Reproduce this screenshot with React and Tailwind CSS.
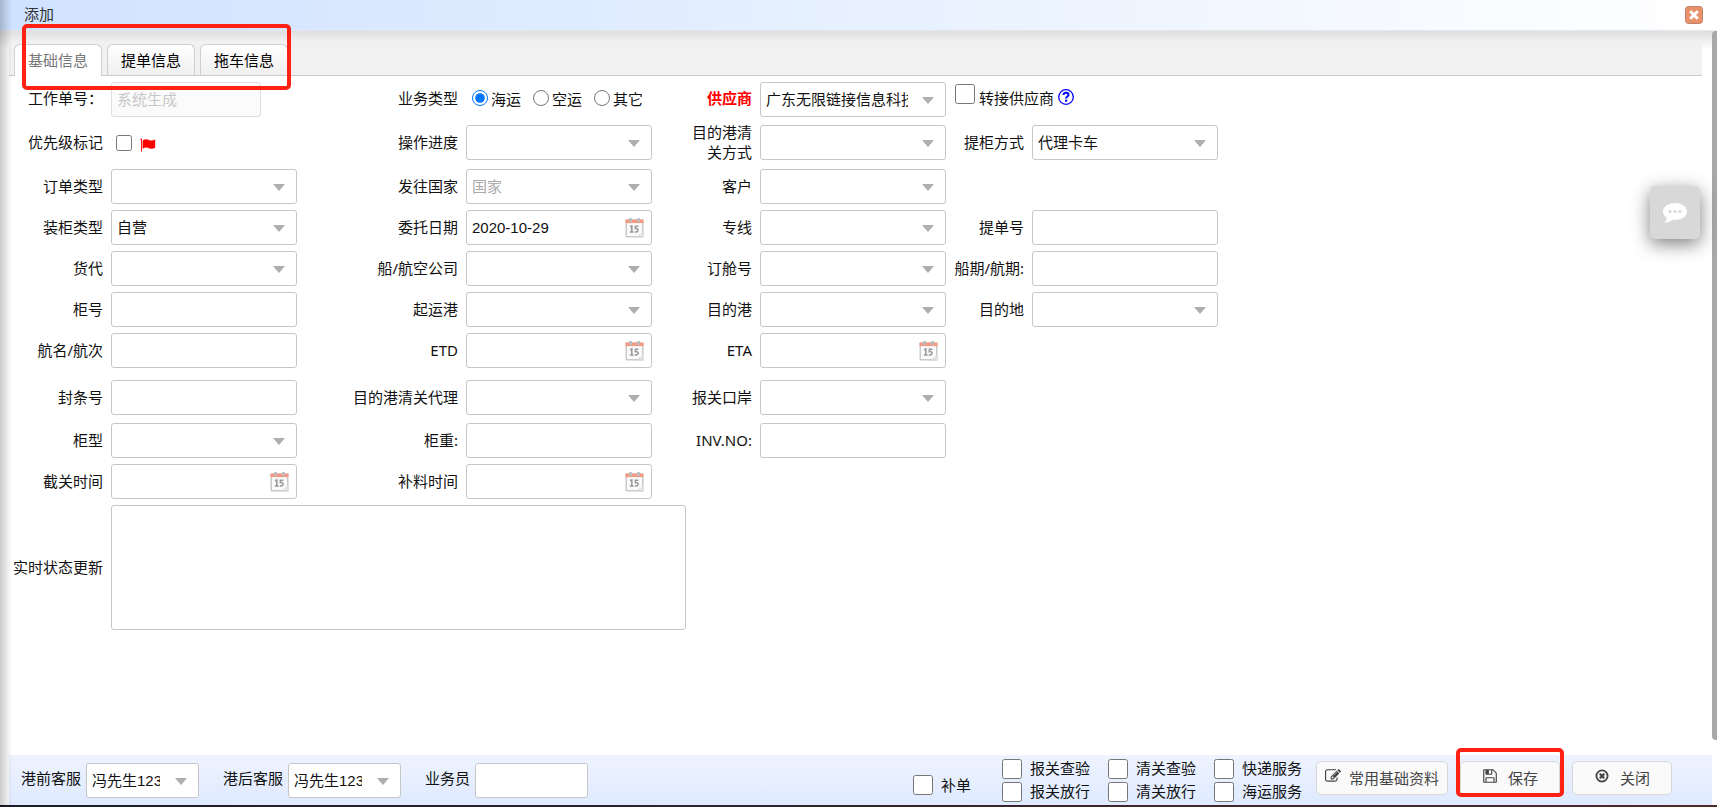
import React, { useState } from "react";

const labelFont = "font-['Noto_Sans','Noto_Sans_CJK_SC',sans-serif]";
const fieldFont = "font-['Liberation_Sans','Noto_Sans_CJK_SC',sans-serif]";
const box =
  "h-[35px] w-full rounded-[3px] border border-[#c6c6c6] bg-white pl-[5px] text-[15px] text-[#111] outline-none placeholder:text-[#a9a9a9] " +
  fieldFont;

function Arrow() {
  return (
    <svg
      className="pointer-events-none absolute top-[15px] right-3 h-[7px] w-[12px]"
      viewBox="0 0 12 7"
      aria-hidden="true"
    >
      <path d="M0 0H12L6 7Z" fill="#aeaeae" />
    </svg>
  );
}

function Calendar() {
  return (
    <svg
      className="pointer-events-none absolute top-2 right-2 h-5 w-[19px]"
      viewBox="0 0 19 20"
      aria-hidden="true"
    >
      <rect x="0.5" y="1.5" width="18" height="18" rx="1" fill="#c9c9c9" />
      <rect x="2" y="4" width="15" height="14" fill="#fbfbfb" />
      <rect x="0.5" y="1.5" width="18" height="3.6" fill="#f59a82" />
      <rect x="4" y="0" width="3" height="4" rx="1" fill="#b9bcc0" />
      <rect x="12" y="0" width="3" height="4" rx="1" fill="#b9bcc0" />
      <path d="M5 8.8L6.8 8V14M4.8 14H8.6" fill="none" stroke="#999" strokeWidth="1.6" />
      <path
        d="M13.4 8.2H10.4V10.6C12 10.2 13.2 11 13.1 12.3C13 13.8 11.2 14.3 9.8 13.7"
        fill="none"
        stroke="#999"
        strokeWidth="1.6"
      />
      <path d="M11 19.5L18.5 13V19.5Z" fill="#d6d6d6" />
      <path d="M12 17.5H14M15.5 15V18M17 14.5V18" stroke="#efefef" strokeWidth="1" />
    </svg>
  );
}

function SelectBox({ id, value = "", placeholder, clip = "pr-[37px]" }) {
  return (
    <div className="relative">
      <select
        id={id}
        defaultValue={value}
        className={`${box} ${clip} appearance-none overflow-hidden pt-[2px] ${placeholder ? "text-[#a9a9a9]" : ""}`}
      >
        <option value={value}>{value || placeholder || ""}</option>
      </select>
      <Arrow />
    </div>
  );
}

function DateBox({ id, value = "" }) {
  return (
    <div className="relative">
      <input id={id} type="text" defaultValue={value} className={`${box} pr-8`} />
      <Calendar />
    </div>
  );
}

function FieldLabel({ htmlFor, children, wrap }) {
  return (
    <label
      htmlFor={htmlFor}
      className={`justify-self-end pr-px pb-[2px] text-right text-[15px] leading-5 ${wrap ? "w-16" : "whitespace-nowrap"}`}
    >
      {children}
    </label>
  );
}

function Cell({ id, label, kind, value, placeholder, wrap }) {
  return (
    <>
      <FieldLabel htmlFor={id} wrap={wrap}>
        {label}
      </FieldLabel>
      {kind === "select" && <SelectBox id={id} value={value} placeholder={placeholder} />}
      {kind === "date" && <DateBox id={id} value={value} />}
      {kind === "text" && <input id={id} type="text" className={box} />}
    </>
  );
}

function Row({ className = "h-[41px]", children }) {
  return (
    <div
      className={`grid grid-cols-[104px_186px_155px_186px_94px_186px_72px_186px] items-center gap-x-[7px] ${className}`}
    >
      {children}
    </div>
  );
}

const rows = [
  [
    { id: "orderType", label: "订单类型", kind: "select" },
    { id: "country", label: "发往国家", kind: "select", placeholder: "国家" },
    { id: "customer", label: "客户", kind: "select" },
  ],
  [
    { id: "loadType", label: "装柜类型", kind: "select", value: "自营" },
    { id: "entrustDate", label: "委托日期", kind: "date", value: "2020-10-29" },
    { id: "line", label: "专线", kind: "select" },
    { id: "blNo", label: "提单号", kind: "text" },
  ],
  [
    { id: "forwarder", label: "货代", kind: "select" },
    { id: "carrier", label: "船/航空公司", kind: "select" },
    { id: "bookingNo", label: "订舱号", kind: "select" },
    { id: "schedule", label: "船期/航期:", kind: "text" },
  ],
  [
    { id: "containerNo", label: "柜号", kind: "text" },
    { id: "pol", label: "起运港", kind: "select" },
    { id: "pod", label: "目的港", kind: "select" },
    { id: "destination", label: "目的地", kind: "select" },
  ],
  [
    { id: "vessel", label: "航名/航次", kind: "text" },
    { id: "etd", label: "ETD", kind: "date" },
    { id: "eta", label: "ETA", kind: "date" },
  ],
  [
    { id: "sealNo", label: "封条号", kind: "text" },
    { id: "podAgent", label: "目的港清关代理", kind: "select" },
    { id: "customsPort", label: "报关口岸", kind: "select" },
  ],
  [
    { id: "containerType", label: "柜型", kind: "select" },
    { id: "containerWeight", label: "柜重:", kind: "text" },
    { id: "invNo", label: "INV.NO:", kind: "text" },
  ],
  [
    { id: "cutoff", label: "截关时间", kind: "date" },
    { id: "supplement", label: "补料时间", kind: "date" },
  ],
];

const services = ["报关查验", "清关查验", "快递服务", "报关放行", "清关放行", "海运服务"];

const tabs = ["基础信息", "提单信息", "拖车信息"];

function EditIcon() {
  return (
    <svg className="h-4 w-4" viewBox="0 0 1792 1792" fill="currentColor" aria-hidden="true">
      <path d="M888 1184l116-116-152-152-116 116v56h96v96h56zm440-720q-16-16-33 1l-350 350q-17 17-1 33t33-1l350-350q17-17 1-33zm80 594v190q0 119-84.5 203.5t-203.5 84.5h-832q-119 0-203.5-84.5t-84.5-203.5v-832q0-119 84.5-203.5t203.5-84.5h832q63 0 117 25 15 7 18 23 3 17-9 29l-49 49q-14 14-32 8-23-6-45-6h-832q-66 0-113 47t-47 113v832q0 66 47 113t113 47h832q66 0 113-47t47-113v-126q0-13 9-22l64-64q15-15 35-7t20 29zm-96-738l288 288-672 672h-288v-288zm444 132l-92 92-288-288 92-92q28-28 68-28t68 28l152 152q28 28 28 68t-28 68z" />
    </svg>
  );
}

function SaveIcon() {
  return (
    <svg className="h-4 w-4" viewBox="0 0 1792 1792" fill="currentColor" aria-hidden="true">
      <path d="M512 1536h768v-384h-768v384zm896 0h128v-896q0-14-10-38.5t-20-34.5l-281-281q-10-10-34-20t-39-10v416q0 40-28 68t-68 28h-576q-40 0-68-28t-28-68v-416h-128v1280h128v-416q0-40 28-68t68-28h832q40 0 68 28t28 68v416zm-384-928v-320q0-13-9.5-22.5t-22.5-9.5h-192q-13 0-22.5 9.5t-9.5 22.5v320q0 13 9.5 22.5t22.5 9.5h192q13 0 22.5-9.5t9.5-22.5zm640 32v928q0 40-28 68t-68 28h-1344q-40 0-68-28t-28-68v-1344q0-40 28-68t68-28h928q40 0 88 20t76 48l280 280q28 28 48 76t20 88z" />
    </svg>
  );
}

function CancelIcon() {
  return (
    <svg className="h-4 w-4" viewBox="0 0 16 16" fill="none" stroke="currentColor" aria-hidden="true">
      <circle cx="8" cy="8" r="5.6" strokeWidth="1.8" />
      <path d="M5.8 5.8L10.2 10.2M10.2 5.8L5.8 10.2" strokeWidth="2.3" />
    </svg>
  );
}

function ToolButton({ className, icon, gap = "gap-[10px]", children }) {
  return (
    <button
      type="button"
      className={`flex h-[34px] items-center justify-center rounded-[5px] border border-[#d8d8d8] bg-[#fafafa] text-[15px] text-[#444] ${gap} ${className}`}
    >
      <span className="pb-1">{icon}</span>
      {children}
    </button>
  );
}

export default function App() {
  const [active, setActive] = useState(0);
  const [type, setType] = useState("海运");

  return (
    <div className={`relative flex min-h-screen flex-col bg-white text-[15px] text-[#111] ${labelFont}`}>
      <header className="flex h-[31px] items-center justify-between border-b border-[#e4e8ee] bg-linear-to-r from-[#cfe2ff] to-white pr-[14px] pl-6">
        <h1 className="pb-[2px] text-[15px] text-[#333]">添加</h1>
        <button type="button" aria-label="关闭窗口">
          <svg className="h-[18px] w-[18px]" viewBox="0 0 18 18">
            <rect x="0.5" y="0.5" width="17" height="17" rx="3" fill="#e8926c" stroke="#c0806c" />
            <path d="M5.2 5.2L12.8 12.8M12.8 5.2L5.2 12.8" stroke="#fff" strokeWidth="3" />
          </svg>
        </button>
      </header>

      <main className="flex-1">
        <div className="bg-linear-to-b from-[#dedede] to-white to-40% pr-[15px] pl-[9px]">
          <div
            role="tablist"
            className="flex h-[45px] items-end gap-[5px] border-b border-[#cbcbcb] bg-linear-to-b from-[#dfdfdf] to-[#f1f1f1] to-25% pl-[5px]"
          >
            {tabs.map((tab, i) => (
              <button
                key={tab}
                type="button"
                role="tab"
                aria-selected={active === i}
                onClick={() => setActive(i)}
                className={`w-[88px] rounded-t-[6px] border border-b-0 border-[#cfcfcf] text-[15px] ${
                  active === i
                    ? "-mb-px h-8 bg-white pb-px text-[#777]"
                    : "h-[31px] bg-linear-to-b from-white to-[#efefef] text-black"
                }`}
              >
                {tab}
              </button>
            ))}
          </div>
        </div>

        <form className="pt-[3px]">
          <Row className="h-10">
            <FieldLabel htmlFor="jobNo">工作单号：</FieldLabel>
            <input
              id="jobNo"
              type="text"
              disabled
              placeholder="系统生成"
              className={`h-[35px] w-[150px] rounded-[3px] border border-[#dedede] bg-[#fbfbfb] pl-[5px] text-[15px] placeholder:text-[#c8c8c8] ${fieldFont}`}
            />
            <span id="bizType" className="justify-self-end pr-px pb-[2px]">
              业务类型
            </span>
            <div role="radiogroup" aria-labelledby="bizType" className="flex items-center gap-3 pl-[6px]">
              {["海运", "空运", "其它"].map((t) => (
                <label key={t} className="flex items-center gap-[3px] whitespace-nowrap">
                  <input
                    type="radio"
                    name="biz"
                    className="mb-[2px] h-4 w-4 accent-[#0075ff]"
                    checked={type === t}
                    onChange={() => setType(t)}
                  />
                  {t}
                </label>
              ))}
            </div>
            <label htmlFor="supplier" className="justify-self-end pr-px pb-[2px] font-bold text-[#f00]">
              供应商
            </label>
            <SelectBox id="supplier" value="广东无限链接信息科技有限公司" />
            <div className="col-span-2 flex items-center gap-1 pb-[2px] pl-[2px]">
              <input id="transfer" type="checkbox" className="mb-2 h-5 w-5" />
              <label htmlFor="transfer">转接供应商</label>
              <svg className="mb-[2px] h-4 w-4" viewBox="0 0 16 16" fill="none" stroke="#00f" aria-hidden="true">
                <circle cx="8" cy="8" r="7.3" strokeWidth="1.3" />
                <path d="M5.5 6.1C5.5 4.5 6.6 3.8 8 3.8S10.5 4.6 10.5 5.9C10.5 7.5 8.1 7.6 8.1 9.5" strokeWidth="2" />
                <path d="M8.1 10.6V12.7" strokeWidth="2.2" />
              </svg>
            </div>
          </Row>

          <Row className="h-[47px]">
            <FieldLabel htmlFor="priority">优先级标记</FieldLabel>
            <div className="flex items-center gap-2 pl-[5px]">
              <input id="priority" type="checkbox" className="h-4 w-4" />
              <svg className="mt-1 h-[14px] w-4" viewBox="0 0 16 14" aria-hidden="true">
                <path d="M0.6 0.5H2V13.5H1.1V2.6L0.6 2Z" fill="#f00" />
                <path
                  d="M2.6 2.4C5 0.9 7 1 9 1.9C11.4 2.9 13 2.2 15.2 1.4V9.8C13 10.8 11.2 11.2 9 10.2C7 9.3 5 9.3 2.6 10.8Z"
                  fill="#f00"
                />
              </svg>
            </div>
            <Cell id="progress" label="操作进度" kind="select" />
            <Cell id="clearance" label="目的港清关方式" kind="select" wrap />
            <Cell id="pickup" label="提柜方式" kind="select" value="代理卡车" />
          </Row>

          {rows.map((cells, i) => (
            <Row key={cells[0].id} className={i === 5 ? "h-[49px] pt-1" : "h-[41px]"}>
              {cells.map((cell) => (
                <Cell key={cell.id} {...cell} />
              ))}
            </Row>
          ))}

          <div className="grid grid-cols-[104px_575px] items-center gap-x-[7px] pt-[3px]">
            <FieldLabel htmlFor="status">实时状态更新</FieldLabel>
            <textarea
              id="status"
              className="block h-[125px] w-full resize-none rounded-[3px] border border-[#c6c6c6] p-[5px] outline-none"
            />
          </div>
        </form>
      </main>

      <footer className="mr-[5px] ml-[9px] flex h-[50px] items-center bg-linear-to-b from-[#eef3ff] to-[#dfeaff] pl-3">
        <div className="flex flex-1 items-center gap-6 whitespace-nowrap">
          <div className="flex items-center gap-[5px]">
            <label htmlFor="preService" className="pb-[3px]">
              港前客服
            </label>
            <div className="w-[113px]">
              <SelectBox id="preService" value="冯先生123" clip="pr-[38px]" />
            </div>
          </div>
          <div className="flex items-center gap-[5px]">
            <label htmlFor="postService" className="pb-[3px]">
              港后客服
            </label>
            <div className="w-[113px]">
              <SelectBox id="postService" value="冯先生123" clip="pr-[38px]" />
            </div>
          </div>
          <div className="flex items-center gap-[5px]">
            <label htmlFor="salesman" className="pb-[3px]">
              业务员
            </label>
            <div className="w-[113px]">
              <input id="salesman" type="text" className={box} />
            </div>
          </div>
        </div>

        <label className="mt-[10px] mr-[31px] flex items-center gap-2">
          <input type="checkbox" className="h-5 w-5" />
          补单
        </label>

        <div className="mr-[14px] grid grid-cols-3 gap-x-[18px] gap-y-[3px]">
          {services.map((name) => (
            <label key={name} className="flex h-5 items-center gap-2 whitespace-nowrap">
              <input type="checkbox" className="h-5 w-5" />
              {name}
            </label>
          ))}
        </div>

        <div className="mr-[40px] mb-1 flex items-center gap-3">
          <ToolButton className="w-[132px]" icon={<EditIcon />} gap="gap-2">
            常用基础资料
          </ToolButton>
          <div className="relative">
            <ToolButton className="w-[100px]" icon={<SaveIcon />}>
              保存
            </ToolButton>
            <span className="pointer-events-none absolute -top-[13px] -right-1 -bottom-[2px] -left-1 rounded-[5px] border-4 border-[#ff2114]" />
          </div>
          <ToolButton className="w-[100px]" icon={<CancelIcon />}>
            关闭
          </ToolButton>
        </div>
      </footer>
      <div className="h-[2px] bg-linear-to-r from-[#1a1b2b] to-[#4d2b29]" />

      <div className="pointer-events-none absolute inset-y-0 left-0 w-3 bg-linear-to-r from-black/20 to-transparent" />
      <div className="pointer-events-none absolute top-6 left-[22px] h-[66px] w-[269px] rounded-[5px] border-4 border-[#ff2114]" />
      <div className="absolute top-[31px] right-0 bottom-[67px] w-[5px] rounded-l-[4px] bg-[#a8a8a8]" />
      <button
        type="button"
        aria-label="在线客服"
        className="absolute top-[186px] right-[17px] flex h-[53px] w-[50px] items-center justify-center rounded-[5px] bg-[#d8d8d8] shadow-[0_5px_18px_rgba(0,0,0,0.5)]"
      >
        <svg className="h-5 w-6" viewBox="0 0 24 20" aria-hidden="true">
          <ellipse cx="12" cy="8.5" rx="12" ry="8.5" fill="#fff" />
          <path d="M4 13C4 16 3 18 1.2 19.6C5 19.8 8.5 18.5 10.5 15.5Z" fill="#fff" />
          <circle cx="7" cy="8.6" r="1.5" fill="#d8d8d8" />
          <circle cx="12" cy="8.6" r="1.5" fill="#d8d8d8" />
          <circle cx="17" cy="8.6" r="1.5" fill="#d8d8d8" />
        </svg>
      </button>
    </div>
  );
}
